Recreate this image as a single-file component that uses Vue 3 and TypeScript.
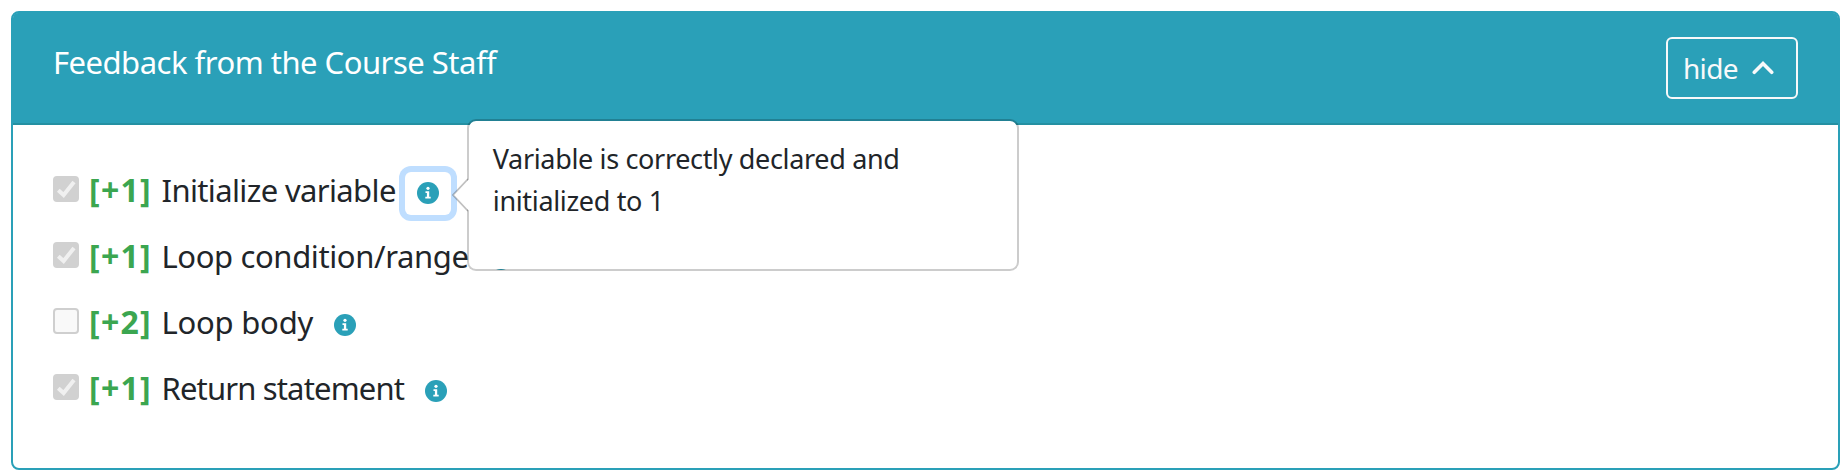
<script setup lang="ts">
import { ref } from 'vue'

interface RubricItem {
  id: string
  points: number
  label: string
  checked: boolean
  hint?: string
}

const items: RubricItem[] = [
  {
    id: 'init',
    points: 1,
    label: 'Initialize variable',
    checked: true,
    hint: 'Variable is correctly declared and initialized to 1',
  },
  { id: 'loop', points: 1, label: 'Loop condition/range', checked: true },
  { id: 'body', points: 2, label: 'Loop body', checked: false },
  { id: 'return', points: 1, label: 'Return statement', checked: true },
]

const expanded = ref(true)
const activeId = ref<string | null>('init')

function toggleHint(id: string): void {
  activeId.value = activeId.value === id ? null : id
}
</script>

<template>
  <section class="card">
    <header class="card-header">
      <h2 class="title">Feedback from the Course Staff</h2>
      <button class="toggle" type="button" @click="expanded = !expanded">
        <span class="toggle-text">hide</span>
        <svg class="chevron" viewBox="0 0 22 14" width="22" height="14">
          <path d="M2.3 11.3 11 2.6l8.7 8.7" />
        </svg>
      </button>
    </header>
    <ul v-if="expanded" class="rubric">
      <li v-for="item in items" :key="item.id" class="row" :class="item.id">
        <span class="box" :class="{ checked: item.checked }">
          <svg v-if="item.checked" viewBox="0 0 26 26" width="26" height="26">
            <path d="M5.3 14.2 10.6 19 21 6" />
          </svg>
        </span>
        <strong class="points">[+{{ item.points }}]</strong>
        <span class="label">{{ item.label }}</span>
        <span class="anchor">
          <button
            class="info"
            :class="{ active: activeId === item.id }"
            type="button"
            @click="toggleHint(item.id)"
          >
            <svg viewBox="0 0 22 22" width="22" height="22">
              <circle cx="11" cy="11" r="11" fill="#2aa0b8" />
              <circle cx="11" cy="6.3" r="1.6" fill="#fff" />
              <path d="M8.5 9.2h3.7v5.6h1.5v1.8H8.3v-1.8h1.6v-3.7H8.5z" fill="#fff" />
            </svg>
          </button>
          <span v-if="item.hint && activeId === item.id" class="popover">
            <svg class="arrow" viewBox="0 0 17 34" width="17" height="34">
              <path class="arrow-fill" d="M17 1 1 17l16 16z" />
              <path class="arrow-line" d="M16 1 1 17l15 16" />
            </svg>
            <span class="hint">{{ item.hint }}</span>
          </span>
        </span>
      </li>
    </ul>
  </section>
</template>

<style>
body {
  background: #fff;
}
</style>

<style scoped>
.card {
  box-sizing: border-box;
  width: 1829px;
  height: 459px;
  margin: 11px 0 0 11px;
  border: 2px solid #2aa0b8;
  border-radius: 8px;
  background: #fff;
  color: #212529;
  font-family: "Noto Sans", "Open Sans", sans-serif;
}
.card-header {
  box-sizing: border-box;
  display: flex;
  justify-content: space-between;
  align-items: flex-start;
  height: 112px;
  padding: 24px 40px 0;
  border-bottom: 2px solid #2490a2;
  border-radius: 5px 5px 0 0;
  background: #2aa0b8;
}
.title {
  margin: 3px 0 0;
  color: #fff;
  font-size: 31px;
  font-weight: 400;
  line-height: 44px;
  letter-spacing: -0.5px;
}
.toggle {
  box-sizing: border-box;
  display: flex;
  align-items: center;
  gap: 15px;
  width: 132px;
  height: 62px;
  padding: 0 0 0 15px;
  border: 2px solid #f8f9fa;
  border-radius: 6px;
  background: transparent;
  color: #f8f9fa;
  font: 28px/42px "Noto Sans", sans-serif;
}
.toggle-text {
  width: 54px;
  letter-spacing: -0.7px;
}
.chevron {
  fill: none;
  stroke: #f8f9fa;
  stroke-width: 3.6;
  stroke-linecap: round;
  stroke-linejoin: miter;
}
.rubric {
  margin: 0;
  padding: 31px 40px;
  list-style: none;
}
.row {
  display: flex;
  align-items: center;
  height: 66px;
}
.box {
  box-sizing: border-box;
  width: 26px;
  height: 26px;
  border: 2px solid #cfcfcf;
  border-radius: 4px;
  background: #f9f9f9;
}
.box.checked {
  border: 0;
  background: #d1d1d1;
}
.box svg {
  display: block;
  fill: none;
  stroke: #f0f0f0;
  stroke-width: 4;
}
.points {
  width: 72.5px;
  margin: 2px 0 0 10px;
  color: #3ba650;
  font-size: 32px;
  line-height: 48px;
  letter-spacing: 1.3px;
}
.label {
  margin-top: 2px;
  font-size: 31px;
  line-height: 48px;
  white-space: nowrap;
}
.init .label {
  letter-spacing: -0.63px;
}
.loop .label {
  letter-spacing: -0.38px;
}
.body .label {
  letter-spacing: -0.22px;
}
.return .label {
  letter-spacing: -0.84px;
}
.anchor {
  position: relative;
  display: flex;
  margin: 8px 0 0 9px;
}
.info {
  display: flex;
  align-items: center;
  justify-content: center;
  width: 46px;
  height: 43px;
  padding: 0;
  border: 0;
  border-radius: 6px;
  background: transparent;
  outline: none;
}
.info.active {
  box-shadow: 0 0 0 6px #bfdeff;
}
.popover {
  position: absolute;
  z-index: 2;
  top: -53px;
  left: 62px;
  box-sizing: border-box;
  width: 552px;
  height: 152px;
  padding: 17px 24px;
  border: 2px solid rgba(0, 0, 0, 0.2);
  border-radius: 9px;
  background: #fff;
  background-clip: padding-box;
}
.arrow {
  position: absolute;
  top: 57px;
  left: -17px;
}
.arrow-fill {
  fill: #fff;
}
.arrow-line {
  fill: none;
  stroke: rgba(0, 0, 0, 0.25);
  stroke-width: 1.8;
}
.hint {
  display: block;
  width: 420px;
  font-size: 27px;
  line-height: 42px;
  letter-spacing: -0.34px;
}
</style>
